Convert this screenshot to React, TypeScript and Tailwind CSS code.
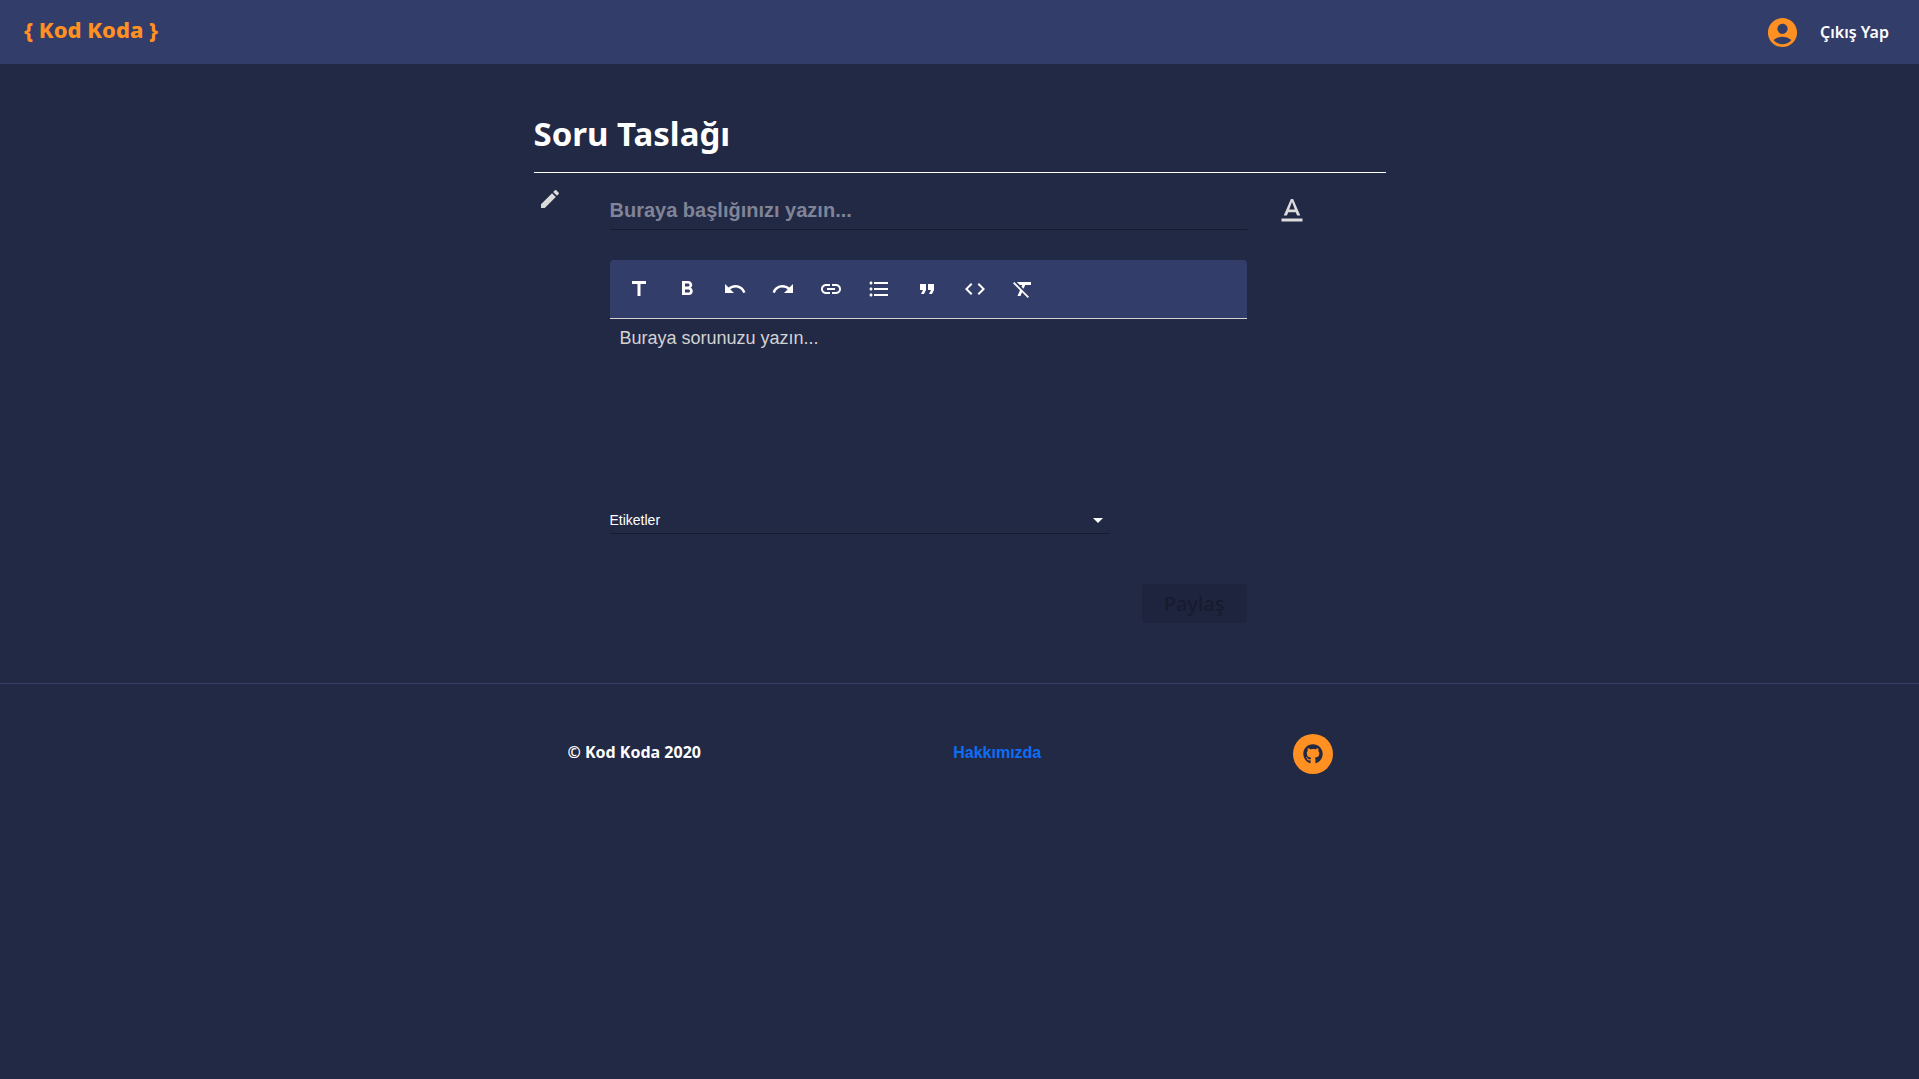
import React from "react";
import type { IconType } from "react-icons";
import {
  MdAccountCircle,
  MdArrowDropDown,
  MdCode,
  MdEdit,
  MdFormatBold,
  MdFormatClear,
  MdFormatListBulleted,
  MdFormatQuote,
  MdLink,
  MdRedo,
  MdTextFormat,
  MdTitle,
  MdUndo,
} from "react-icons/md";
import { FaGithub } from "react-icons/fa";

const tools: { label: string; Icon: IconType }[] = [
  { label: "Başlık", Icon: MdTitle },
  { label: "Kalın", Icon: MdFormatBold },
  { label: "Geri al", Icon: MdUndo },
  { label: "Yinele", Icon: MdRedo },
  { label: "Bağlantı", Icon: MdLink },
  { label: "Liste", Icon: MdFormatListBulleted },
  { label: "Alıntı", Icon: MdFormatQuote },
  { label: "Kod", Icon: MdCode },
  { label: "Biçimi temizle", Icon: MdFormatClear },
];

function Header() {
  return (
    <header className="flex h-16 items-center justify-between bg-[#333d69] pr-[30px] pl-6">
      <a href="#" className="pb-[6px] font-['Noto_Sans',sans-serif] text-[22px] font-extrabold text-[#ff9021]">
        {"{ Kod Koda }"}
      </a>
      <nav className="flex items-center gap-5">
        <a href="#" aria-label="Profil" className="text-[#ff9021]">
          <MdAccountCircle className="size-[35px]" />
        </a>
        <button type="button" className="font-['Noto_Sans',sans-serif] text-base font-semibold">
          Çıkış Yap
        </button>
      </nav>
    </header>
  );
}

function Toolbar() {
  return (
    <div role="toolbar" aria-label="Biçimlendirme" className="flex h-[59px] items-center rounded-t border-b border-[#d3d3d3] bg-[#333d69] px-[5px]">
      {tools.map(({ label, Icon }) => (
        <button key={label} type="button" aria-label={label} className="grid size-12 place-items-center">
          <Icon className="size-6" />
        </button>
      ))}
    </div>
  );
}

function QuestionForm() {
  return (
    <form className="grid grid-cols-[76px_minmax(0,1fr)_139px]">
      <div className="pt-[14px] pl-1 text-[#dcdcdc]">
        <MdEdit className="size-6" />
      </div>
      <div>
        <input
          type="text"
          aria-label="Başlık"
          placeholder="Buraya başlığınızı yazın..."
          className="mt-5 block h-[37px] w-full border-b border-[#171b2e] bg-transparent pb-[2px] text-xl font-bold outline-none placeholder:text-[#808497]"
        />
        <div className="mt-[30px]">
          <Toolbar />
          <textarea
            aria-label="Soru"
            placeholder="Buraya sorunuzu yazın..."
            className="block h-[184px] w-full resize-none bg-transparent px-[10px] py-[7px] text-lg leading-6 outline-none placeholder:text-[#d3d3d3]"
          />
        </div>
        <div className="relative w-[500px] max-w-full">
          <select aria-label="Etiketler" className="block h-[31px] w-full appearance-none border-b border-[#171b2e] bg-transparent pt-1 text-sm outline-none">
            <option>Etiketler</option>
          </select>
          <MdArrowDropDown className="pointer-events-none absolute right-0 bottom-[2px] size-6" />
        </div>
        <div className="mt-[50px] flex justify-end">
          <button
            type="submit"
            disabled
            className="h-[39px] rounded bg-[#1f243e] px-[22px] font-['Noto_Sans',sans-serif] text-xl font-medium text-[#171b2e]"
          >
            Paylaş
          </button>
        </div>
      </div>
      <div className="pt-5 pl-[27px] text-[#dcdcdc]">
        <MdTextFormat className="size-9" />
      </div>
    </form>
  );
}

function Footer() {
  return (
    <footer className="mt-[60px] border-t border-[#333d69] pt-[50px]">
      <div className="mx-auto flex max-w-[852px] items-center justify-between pr-[52px] pl-[34px]">
        <p className="pb-1 font-['Noto_Sans',sans-serif] text-base font-bold">© Kod Koda 2020</p>
        <a href="#" className="pb-[2px] text-base font-bold text-[#0d6ef7]">
          Hakkımızda
        </a>
        <a href="#" aria-label="GitHub" className="grid size-10 place-items-center rounded-full bg-[#ff9021] text-[#222945]">
          <FaGithub className="size-5" />
        </a>
      </div>
    </footer>
  );
}

export default function App() {
  return (
    <div className="min-h-screen bg-[#222945] font-['Liberation_Sans',Arial,sans-serif] text-white">
      <Header />
      <main className="mx-auto max-w-[852px] pt-[42px]">
        <h1 className="border-b border-white pb-[10px] font-['Noto_Sans',sans-serif] text-[33px] leading-[56px] font-bold">
          Soru Taslağı
        </h1>
        <QuestionForm />
      </main>
      <Footer />
    </div>
  );
}
